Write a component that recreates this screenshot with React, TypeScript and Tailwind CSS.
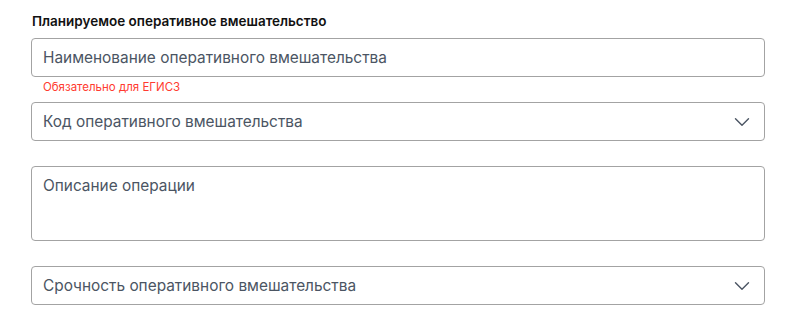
import { ChevronDown } from "lucide-react";

const font = { fontFamily: "Inter, 'Noto Sans', sans-serif" };

function SelectField({ label }: { label: string }) {
  return (
    <div className="flex h-[39px] items-center justify-between rounded border border-[#a3a3a3] bg-white pl-[11px] pr-[9px]">
      <span className="text-[15.4px] text-[#4b5563]">{label}</span>
      <ChevronDown size={26} strokeWidth={1.3} className="text-[#4b5563]" />
    </div>
  );
}

export default function App() {
  return (
    <div className="min-h-[334px] bg-white pl-[31px] pr-[35px] pt-[12px] pb-8" style={font}>
      <h2 className="mb-[8px] pl-[1px] text-[13.5px] leading-[18px] font-semibold text-[#111]">
        Планируемое оперативное вмешательство
      </h2>
      <div className="flex h-[39px] items-center rounded border border-[#a3a3a3] bg-white pl-[11px]">
        <span className="text-[15.4px] text-[#4b5563]">Наименование оперативного вмешательства</span>
      </div>
      <p className="mt-[2px] mb-[7px] pl-[12px] text-[11.5px] leading-[16px] text-[#ff3b30]">
        Обязательно для ЕГИСЗ
      </p>
      <SelectField label="Код оперативного вмешательства" />
      <div className="mt-[25px] h-[75px] rounded border border-[#a3a3a3] bg-white pl-[11px] pt-[6px]">
        <span className="text-[15.4px] leading-6 text-[#4b5563]">Описание операции</span>
      </div>
      <div className="mt-[25px]">
        <SelectField label="Срочность оперативного вмешательства" />
      </div>
    </div>
  );
}
